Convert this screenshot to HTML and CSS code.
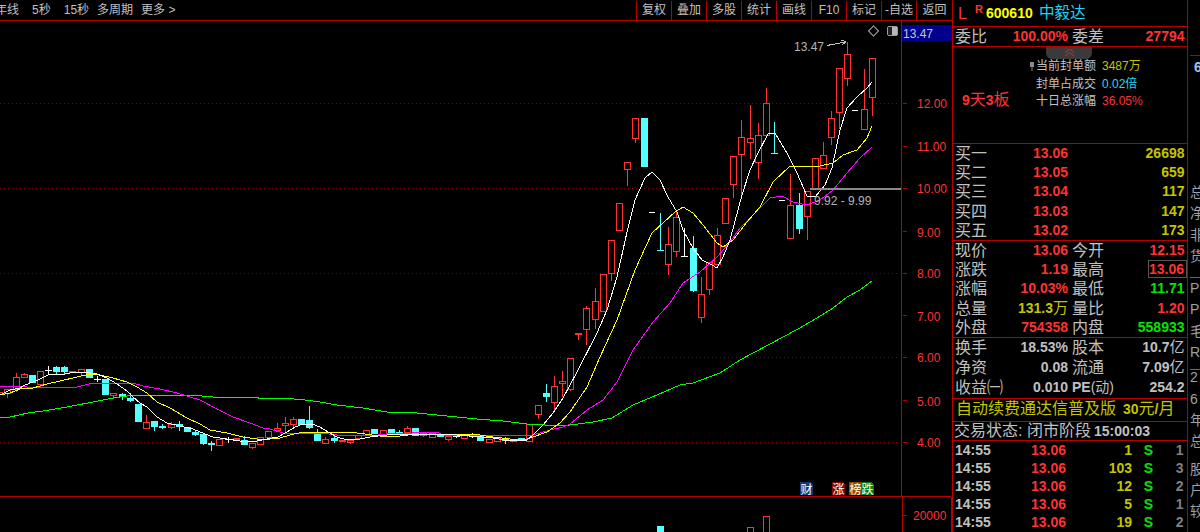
FILE: index.html
```html
<!DOCTYPE html>
<html lang="zh">
<head>
<meta charset="utf-8">
<title>600610 中毅达</title>
<link rel="stylesheet" href="styles.css">
</head>
<body>
<div class="app">
  <div class="main">
    <div class="toolbar">
      <div class="periods">
        <span class="clip">年线</span><span>5秒</span><span>15秒</span><span class="tight">多周期</span><span class="tight">更多 &gt;</span>
      </div>
      <div class="tools">
        <span>复权</span><span>叠加</span><span>多股</span><span>统计</span><span>画线</span><span>F10</span><span>标记</span><span>-自选</span><span>返回</span>
      </div>
    </div>
    <svg class="chart" width="952" height="511" viewBox="0 21 952 511">
      <g class="grid">
        <path d="M0 103.5H900M0 188.5H900M0 273.5H900M0 357.5H900M0 442.5H900"/>
      </g>
      <g class="frame">
        <path d="M901.5 21V497M0 496.5H951M902.5 497V532M951 497V532M903 103.5h4M903 146.5h4M903 188.5h4M903 231.5h4M903 273.5h4M903 315.5h4M903 357.5h4M903 400.5h4M903 442.5h4M903 515.5h4"/>
      </g>
      <path class="red" d="M-3.5 392.5h6v2h-6zM4.5 389.5h6v4h-6zM7.5 393.5v4M13.5 377.5h6v12h-6zM16.5 373v4M16.5 389.5v2M21.5 374.5h6v3h-6zM24.5 373v2M37.5 371.5h6v13h-6zM40.5 384v3M78.5 369.5h6v3h-6zM81.5 372v4M110.5 393.5h6v2h-6zM113.5 395v4M143.5 422.5h6v6h-6zM146.5 415v7M168.5 424.5h6v3h-6zM171.5 422v2M171.5 427v2M216.5 439.5h6v6h-6zM249.5 443.5h6v4h-6zM252.5 447v2M257.5 437.5h6v7h-6zM265.5 431.5h6v6h-6zM274.5 428.5h6v2h-6zM277.5 423v5M282.5 423.5h6v2h-6zM285.5 417v6M285.5 425v7M290.5 419.5h6v5h-6zM293.5 417v2M293.5 424v3M322.5 439.5h6v4h-6zM325.5 437v2M347.5 440.5h6v2h-6zM350.5 442v2M355.5 435.5h6v3h-6zM363.5 430.5h6v5h-6zM380.5 430.5h6v5h-6zM404.5 428.5h6v4h-6zM407.5 426v2M429.5 433.5h6v4h-6zM445.5 436.5h6v3h-6zM448.5 439v2M461.5 435.5h6v3h-6zM486.5 439.5h6v3h-6zM494.5 438.5h6v3h-6zM526.5 424.5h6v17h-6zM535.5 405.5h6v9h-6zM538.5 414v5M551.5 386.5h6v16h-6zM554.5 376v10M554.5 402v10M559.5 381.5h6v2h-6zM562.5 371v10M562.5 383v14M567.5 358.5h6v31h-6zM570.5 389v2M583.5 308.5h6v21h-6zM586.5 306v2M586.5 329v16M592.5 301.5h6v18h-6zM595.5 288v13M595.5 319v10M600.5 274.5h6v37h-6zM608.5 240.5h6v33h-6zM611.5 273v8M616.5 203.5h6v27h-6zM624.5 162.5h6v7h-6zM627.5 169v17M632.5 118.5h6v20h-6zM635.5 138v5M665.5 244.5h6v20h-6zM668.5 227v17M668.5 264v11M673.5 217.5h6v34h-6zM676.5 210v7M676.5 251v6M698.5 294.5h6v23h-6zM701.5 277v17M701.5 317v6M706.5 262.5h6v27h-6zM709.5 289v6M714.5 235.5h6v29h-6zM717.5 228v7M722.5 198.5h6v25h-6zM730.5 156.5h6v28h-6zM733.5 184v14M738.5 137.5h6v17h-6zM741.5 120v17M741.5 154v43M747.5 138.5h6v4h-6zM750.5 105v33M750.5 142v17M755.5 135.5h6v27h-6zM758.5 123v12M758.5 162v17M763.5 103.5h6v32h-6zM766.5 88v15M787.5 205.5h6v33h-6zM790.5 174v31M804.5 191.5h6v25h-6zM807.5 216v24M812.5 158.5h6v30h-6zM820.5 155.5h6v13h-6zM823.5 142v13M828.5 118.5h6v19h-6zM831.5 111v7M831.5 137v8M836.5 68.5h6v44h-6zM839.5 112v17M844.5 54.5h6v24h-6zM847.5 42v12M847.5 78v8M861.5 109.5h6v20h-6zM864.5 69v40M869.5 58.5h6v39h-6zM872.5 97v19M747.5 532V527.5h6V532M763.5 532V516.5h6V532"/>
      <path class="red-fill" d="M69 371h7v2h-7zM233 438h7v2h-7zM339 440h7v2h-7zM420 433h7v3h-7zM423 436h1v1h-1zM510 440h7v2h-7zM575 333h7v2h-7zM578 335h1v5h-1z"/>
      <path class="cyan-fill" d="M29 375h7v8h-7zM53 367h7v5h-7zM56 366h1v8h-1zM61 367h7v5h-7zM64 366h1v8h-1zM86 369h7v9h-7zM102 379h7v16h-7zM119 394h7v3h-7zM122 393h1v7h-1zM127 398h7v3h-7zM130 393h1v9h-1zM135 404h7v18h-7zM151 421h7v6h-7zM154 427h1v4h-1zM159 426h7v2h-7zM162 424h1v5h-1zM176 424h7v3h-7zM179 421h1v10h-1zM184 427h7v5h-7zM192 432h7v3h-7zM195 430h1v6h-1zM200 434h7v10h-7zM203 444h1v1h-1zM208 443h7v2h-7zM211 441h1v10h-1zM241 440h7v5h-7zM244 436h1v4h-1zM298 419h7v6h-7zM306 420h7v8h-7zM309 406h1v23h-1zM314 433h7v8h-7zM317 429h1v4h-1zM331 438h7v3h-7zM334 435h1v8h-1zM371 429h7v5h-7zM388 429h7v4h-7zM396 432h7v2h-7zM399 430h1v2h-1zM412 428h7v8h-7zM437 434h7v3h-7zM477 436h7v5h-7zM502 439h7v2h-7zM505 437h1v7h-1zM518 438h7v3h-7zM543 393h7v4h-7zM546 384h1v18h-1zM641 118h7v49h-7zM690 248h7v43h-7zM693 236h1v56h-1zM796 205h7v24h-7zM799 193h1v41h-1zM660 213h1v37h-1zM657 250h7v1h-7zM774 122h1v31h-1zM771 153h7v1h-7zM657 526h7v6h-7z"/>
      <path class="white" d="M45 370.5h7M48.5 366v9M94 379.5h7M97.5 376v6M225 439.5h7M228.5 437v6M453 436.5h7M456.5 434v4M469 436.5h7M472.5 433v5M649 212.5h6M684.5 228v28M681 256.5h7M779 200.5h6M852 110.5h6"/>
      <polyline class="ma ma-green" points="0,418 10,417 28,413 43,411 67,407 93,402 113,398 127,396 143,395 190,395 213,397 247,397 270,399 282,398 305,400 320,402 337,405 363,408 387,412 417,413 447,416 477,419 503,421 527,424 563,426 593,422 612,418 633,405 657,395 680,385 693,383 720,373 740,360 770,344 798,329 817,318 833,308 847,297 860,290 872,281"/>
      <polyline class="ma ma-magenta" points="0,386 27,387 33,388 47,387 77,387 85,385 93,383 133,383 143,386 160,389 177,393 190,397 200,400 217,409 233,417 250,423 263,428 270,429 283,433 303,433 320,433 337,435 370,436 387,434 437,432 443,435 520,436 533,435 550,430 563,427 570,424 587,410 603,400 617,382 633,350 653,322 670,303 683,283 700,272 717,257 730,242 740,228 760,208 770,198 782,196 793,202 807,205 820,200 833,190 847,173 860,158 872,147"/>
      <polyline class="ma ma-yellow" points="0,395 10,393 20,389 33,388 47,384 60,381 77,377 90,374 100,375 113,378 127,382 137,387 147,393 157,402 170,408 187,418 200,424 210,430 227,433 243,437 257,439 270,439 280,438 290,435 303,432 333,432 347,432 357,433 380,436 400,436 417,434 443,434 473,434 493,437 510,439 527,439 533,437 547,432 560,423 570,412 587,387 600,357 617,320 635,270 652,233 675,212 683,207 693,213 703,225 717,243 723,247 733,240 747,222 760,207 773,182 790,166 820,166 833,163 843,155 857,150 867,138 872,126"/>
      <polyline class="ma ma-white" points="0,395 10,390 20,388 25,385 33,382 40,379 48,375 65,374 70,373 77,372 90,373 97,374 107,378 117,384 127,391 133,397 140,403 147,407 157,417 167,423 180,426 193,429 200,432 213,437 227,439 240,441 257,441 267,439 278,437 287,432 295,427 303,424 312,424 320,427 328,432 337,437 347,440 360,439 370,437 387,435 403,434 420,434 443,434 470,436 493,438 510,441 527,440 533,435 543,425 553,413 563,398 577,372 597,333 607,310 617,277 627,232 635,200 645,178 652,172 660,180 668,197 677,212 683,230 693,248 702,260 712,265 717,268 723,257 730,240 742,195 750,170 758,153 768,134 775,133 788,155 797,173 807,196 815,197 825,185 832,168 840,130 847,108 857,97 867,88 872,82"/>
      <path class="bar" d="M810 188h91v2h-91z"/>
      <path class="annot" d="M827 45.5l18-3.5M841.5 40l4.500 2-4 2.500"/>
      <path class="diamond" d="M873.5 26l5 5-5 5-5-5z"/>
      <rect class="toggle" x="887.500" y="26.500" width="10" height="9" rx="2"/>
      <rect class="toggle-on" x="892" y="27" width="5" height="8"/>
      <rect class="price-box" x="902" y="25" width="50" height="16"/>
      <text class="t-price" x="903" y="37.500">13.47</text>
      <text class="t-note" x="794" y="51">13.47</text>
      <text class="t-note" x="814" y="205">9.92 - 9.99</text>
      <g class="t-axis">
        <text x="917" y="108">12.00</text>
        <text x="917" y="151">11.00</text>
        <text x="917" y="193">10.00</text>
        <text x="917" y="237">9.00</text>
        <text x="917" y="278">8.00</text>
        <text x="917" y="321">7.00</text>
        <text x="917" y="362">6.00</text>
        <text x="917" y="406">5.00</text>
        <text x="917" y="447">4.00</text>
        <text x="913" y="520">20000</text>
      </g>
      <path class="b-blue" d="M800 482h10l3 3v10h-13z"/>
      <path class="b-red" d="M832 482h10l3 3v10h-13z"/>
      <path class="b-brown" d="M849 482h13v13h-13z"/>
      <path class="b-green" d="M861 482h10l3 3v10h-13z"/>
      <g class="t-badge">
        <text x="800.500" y="493.500">财</text>
        <text x="832.500" y="493.500">涨</text>
        <text x="849.500" y="493.500">榜</text>
        <text x="861.500" y="493.500">跌</text>
      </g>
    </svg>
  </div>

  <div class="panel">
    <div class="head">
      <span class="l">L</span><span class="r">R</span><span class="code">600610</span><span class="name">中毅达</span>
    </div>
    <div class="sec sec-bid row">
      <span class="lb">委比</span><b class="red-t">100.00%</b><span class="lb lb2">委差</span><b class="red-t">27794</b>
    </div>
    <div class="sec sec-seal">
      <div class="handle">
        <svg width="9" height="7" viewBox="0 0 9 7"><path d="M0 3.500L4.500 0 9 3.500M0 7L4.500 3.500 9 7"/></svg>
      </div>
      <div class="board"><b>9</b>天<b>3</b>板</div>
      <div class="stats">
        <span class="st-lb"><svg class="pin" width="4" height="9" viewBox="0 0 4 9"><path d="M0 0h4v5H2.500v4h-1V5H0z"/></svg>当前封单额</span><span class="yel">3487万</span>
        <span class="st-lb">封单占成交</span><span class="cya">0.02倍</span>
        <span class="st-lb">十日总涨幅</span><span class="red-t">36.05%</span>
      </div>
    </div>
    <div class="sec sec-five">
      <div class="row"><span class="lb">买一</span><b class="red-t">13.06</b><b class="v4 yel">26698</b></div>
      <div class="row"><span class="lb">买二</span><b class="red-t">13.05</b><b class="v4 yel">659</b></div>
      <div class="row"><span class="lb">买三</span><b class="red-t">13.04</b><b class="v4 yel">117</b></div>
      <div class="row"><span class="lb">买四</span><b class="red-t">13.03</b><b class="v4 yel">147</b></div>
      <div class="row"><span class="lb">买五</span><b class="red-t">13.02</b><b class="v4 yel">173</b></div>
    </div>
    <div class="sec sec-five">
      <div class="row"><span class="lb">现价</span><b class="red-t">13.06</b><span class="lb lb2">今开</span><b class="red-t">12.15</b></div>
      <div class="row"><span class="lb">涨跌</span><b class="red-t">1.19</b><span class="lb lb2">最高</span><b class="red-t"><span class="boxed">13.06</span></b></div>
      <div class="row"><span class="lb">涨幅</span><b class="red-t">10.03%</b><span class="lb lb2">最低</span><b class="grn">11.71</b></div>
      <div class="row"><span class="lb">总量</span><b class="yel">131.3<span class="wan">万</span></b><span class="lb lb2">量比</span><b class="red-t">1.20</b></div>
      <div class="row"><span class="lb">外盘</span><b class="red-t">754358</b><span class="lb lb2">内盘</span><b class="grn">558933</b></div>
    </div>
    <div class="sec sec-three">
      <div class="row"><span class="lb">换手</span><b>18.53%</b><span class="lb lb2">股本</span><b>10.7<span class="wan">亿</span></b></div>
      <div class="row"><span class="lb">净资</span><b>0.08</b><span class="lb lb2">流通</span><b>7.09<span class="wan">亿</span></b></div>
      <div class="row"><span class="lb">收益㈠</span><b>0.010</b><span class="lb lb2 pe"><b>PE</b>(动)</span><b>254.2</b></div>
    </div>
    <div class="sec sec-ad">
      <span>自动续费通达信普及版</span><span class="price"><b>30</b>元<b>/</b>月</span>
    </div>
    <div class="sec sec-state">
      <span>交易状态: 闭市阶段</span><b>15:00:03</b>
    </div>
    <div class="ticks">
      <div class="tick"><b>14:55</b><b class="red-t">13.06</b><b class="yel">1</b><b class="grn">S</b><span>1</span></div>
      <div class="tick"><b>14:55</b><b class="red-t">13.06</b><b class="yel">103</b><b class="grn">S</b><span>3</span></div>
      <div class="tick"><b>14:55</b><b class="red-t">13.06</b><b class="yel">12</b><b class="grn">S</b><span>2</span></div>
      <div class="tick"><b>14:55</b><b class="red-t">13.06</b><b class="yel">5</b><b class="grn">S</b><span>1</span></div>
      <div class="tick"><b>14:55</b><b class="red-t">13.06</b><b class="yel">19</b><b class="grn">S</b><span>2</span></div>
    </div>
  </div>

  <div class="side">
    <div class="s-rule s-first"></div>
    <div class="s-num">6</div>
    <div class="s-group-a">
      <div>总</div><div>净</div><div>非</div><div>货</div>
    </div>
    <div class="s-rule s-grey1"></div>
    <div class="s-group-b">
      <div>P</div><div>P</div><div>毛</div><div>R</div>
    </div>
    <div class="s-rule s-grey2"></div>
    <div class="s-group-c">
      <div>2</div><div>6</div><div>年</div><div>总</div>
    </div>
    <div class="s-group-d">
      <div>股</div><div>户</div><div>较</div>
    </div>
  </div>
</div>
</body>
</html>
```

FILE: styles.css
```css
* { box-sizing: border-box; }
html, body { margin: 0; padding: 0; background: #000; }
body { font-family: "Liberation Sans", "Noto Sans CJK SC", sans-serif; color: #c0c0c0; }
b { font-weight: 700; }

.app { display: flex; width: 1200px; height: 532px; overflow: hidden; background: #000; }

/* left: toolbar + chart */
.main { width: 952px; flex: none; display: flex; flex-direction: column; }
.toolbar { height: 21px; flex: none; display: flex; justify-content: space-between; border-bottom: 1px solid #b80000; font-size: 12px; line-height: 20px; overflow: hidden; }
.periods { display: flex; gap: 13px; }
.periods .clip { margin-left: -5px; }
.periods .tight { margin-left: -5px; }
.tools { display: flex; }
.tools span { width: 35px; height: 19px; margin-top: 1px; line-height: 18px; border-left: 1px solid #b80000; text-align: center; white-space: nowrap; }
.tools span:last-child { width: 36px; }

.chart { display: block; flex: none; shape-rendering: crispEdges; }
.grid path { fill: none; stroke: #800000; stroke-width: 1; stroke-dasharray: 1 3; }
.frame path { fill: none; stroke: #b80000; stroke-width: 1; }
.red { fill: none; stroke: #ff3232; stroke-width: 1; }
.red-fill { fill: #ff3232; }
.cyan-fill { fill: #54ffff; }
.white { fill: none; stroke: #fff; stroke-width: 1; }
.ma { fill: none; stroke-width: 1; }
.ma-white { stroke: #fff; }
.ma-yellow { stroke: #ffff00; }
.ma-magenta { stroke: #ff00ff; }
.ma-green { stroke: #00ff00; }
.bar { fill: #8a8a8a; }
.annot { fill: none; stroke: #c0c0c0; stroke-width: 1; }
.diamond { fill: none; stroke: #7a7a7a; stroke-width: 1; }
.toggle { fill: #222; stroke: #9a9a9a; stroke-width: 1; }
.toggle-on { fill: #b8b8b8; }
.price-box { fill: #00008c; }
.chart text { font-family: "Liberation Sans", "Noto Sans CJK SC", sans-serif; }
.t-price { font-size: 12px; fill: #c8c8c8; }
.t-note { font-size: 12px; fill: #b4b4b4; }
.t-axis text { font-size: 12px; fill: #ff3232; }
.b-blue { fill: #0b3c78; }
.b-red { fill: #7d0a0a; }
.b-brown { fill: #8a4c0a; }
.b-green { fill: #0a7d0a; }
.t-badge text { font-size: 12px; fill: #fff; }

/* right panel */
.panel { width: 236px; flex: none; border-left: 1px solid #b80000; border-right: 1px solid #b80000; display: flex; flex-direction: column; }
.head { height: 27px; flex: none; border-bottom: 1px solid #b80000; display: flex; align-items: flex-start; color: #ff3232; }
.head .l { margin: 4px 0 0 5px; font-size: 16px; line-height: 20px; width: 17px; }
.head .r { margin-top: 3px; font-size: 11px; font-weight: 700; line-height: 12px; width: 11px; }
.head .code { margin-top: 4px; font-size: 14px; line-height: 18px; font-weight: 700; color: #ffff00; width: 53px; }
.head .name { margin-top: 1px; font-size: 15.500px; line-height: 24px; color: #1fd4f4; }

.sec { flex: none; border-bottom: 1px solid #b80000; overflow: hidden; }
.sec-seal { overflow: visible; }
.row { display: grid; grid-template-columns: 40px 73px 44px 1fr; padding: 0 2.500px 0 2px; align-items: center; font-size: 14px; line-height: 19px; min-height: 0; height: 19.200px; }
.row > b { text-align: right; white-space: nowrap; }
.row .v4 { grid-column: 4; }
.lb { font-size: 16px; white-space: nowrap; line-height: 19px; }
.lb2 { padding-left: 4px; }
.red-t { color: #ff3232; }
.yel { color: #c4c400; }
.cya { color: #22d6f8; }
.grn { color: #00e600; }
.wan { font-weight: 400; font-size: 15px; line-height: 14px; }

.sec-bid { height: 20px; line-height: 19px; }
.sec-seal { height: 97px; position: relative; display: flex; font-size: 12px; }
.handle { position: absolute; left: 93px; top: 0; width: 46px; height: 12px; background: #3a3a3a; border-radius: 0 0 6px 6px; display: flex; justify-content: center; padding-top: 2px; }
.handle svg { display: block; }
.handle path { fill: none; stroke: #e02c2c; stroke-width: 1; }
.board { width: 75px; padding: 42px 0 0 9px; line-height: 22px; color: #ff3232; font-size: 16px; white-space: nowrap; }
.board b { font-size: 14px; }
.stats { display: grid; grid-template-columns: 68px auto; column-gap: 6px; grid-auto-rows: 17.500px; align-items: center; padding-top: 11px; align-content: start; white-space: nowrap; line-height: 17px; }
.st-lb { text-align: right; }
.pin { fill: #8a8a8a; margin-right: 2px; vertical-align: -1px; }

.sec-five { height: 97px; }
.sec-three { height: 61px; }
.sec-three .row { height: 19.700px; }
.boxed { display: inline-block; width: 39px; height: 18px; margin-right: -2.500px; padding-right: 2px; line-height: 16px; border: 1px solid #555; text-align: right; }
.pe { font-size: 14px; }
.pe b { font-size: 14px; }

.sec-ad { height: 23px; display: flex; gap: 7px; padding-left: 3px; color: #c4c400; font-size: 16px; line-height: 19px; }
.sec-ad .price b { font-size: 14px; }
.sec-state { height: 19px; display: flex; gap: 3px; padding-left: 1px; font-size: 16px; line-height: 18px; }
.sec-state b { font-size: 14px; }

.ticks { flex: 1; font-size: 14px; min-height: 0; overflow: hidden; }
.tick { display: grid; grid-template-columns: 50px 61px 66px 33px 18.500px; height: 18px; line-height: 18px; padding-left: 2px; }
.tick > :nth-child(2), .tick > :nth-child(3), .tick > :nth-child(5) { text-align: right; }
.tick > :nth-child(4) { text-align: center; }
.tick > :nth-child(5) { color: #808080; font-weight: 700; }

/* clipped neighbour column */
.side { flex: 1; min-width: 0; overflow: hidden; padding-left: 2px; font-size: 14px; color: #9aa0a8; white-space: nowrap; }
.s-rule { height: 1px; width: 30px; }
.s-first { margin-top: 55px; background: #b80000; }
.s-num { margin: 1px 0 0 4px; height: 21px; line-height: 21px; color: #9cc4ec; font-weight: 700; }
.s-group-a { margin-top: 104px; }
.s-group-a div, .s-group-b div, .s-group-c div, .s-group-d div { height: 21.300px; line-height: 21.300px; }
.s-grey1 { margin-top: 10px; background: #666; }
.s-grey2 { margin-top: 6px; background: #666; }
.s-group-c { margin-top: -3px; }
.s-group-d { margin-top: 6px; }
```
